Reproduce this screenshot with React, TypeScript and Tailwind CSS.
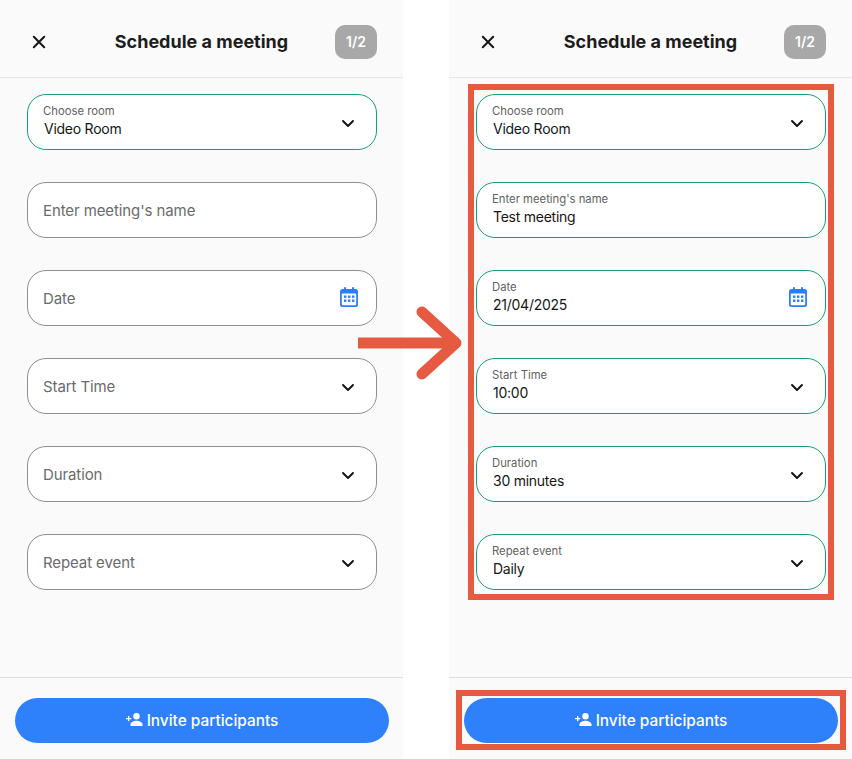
import React from "react";

const font = { fontFamily: "Inter, 'Noto Sans', sans-serif" };

function Chevron() {
  return (
    <svg width="14" height="9" viewBox="0 0 14 9" fill="none" className="shrink-0 mt-[2px]">
      <path d="M2 2l5 5 5-5" stroke="#111" strokeWidth="1.9" strokeLinecap="round" strokeLinejoin="round" />
    </svg>
  );
}

function CalendarIcon() {
  return (
    <svg width="18" height="20" viewBox="0 0 18 20" className="shrink-0 -mr-[3px] -mt-[2px]">
      <rect x="4" y="0" width="2" height="4" rx="1" fill="#2b7fff" />
      <rect x="12" y="0" width="2" height="4" rx="1" fill="#2b7fff" />
      <rect x="0" y="2" width="18" height="18" rx="2.5" fill="#2b7fff" />
      <rect x="1.8" y="6.5" width="14.4" height="11.7" rx="1" fill="#fff" />
      {[4, 8, 12].flatMap((x) =>
        [8.5, 12.5].map((y) => <rect key={`${x}-${y}`} x={x} y={y} width="2.4" height="2.4" fill="#2b7fff" />)
      )}
    </svg>
  );
}

type Item = { label: string; value?: string; icon?: "chevron" | "calendar" };

function Field({ label, value, icon }: Item) {
  const filled = value !== undefined;
  return (
    <div
      className={`h-14 w-[350px] rounded-[19px] border bg-white pl-[15px] pr-[21px] flex items-center justify-between ${
        filled ? "border-[#12a07a]" : "border-[#8f8f8f]"
      }`}
    >
      {filled ? (
        <div className="flex flex-col -mt-[4px]">
          <span className="text-[11.3px] leading-[16px] text-[#5f5f5f]">{label}</span>
          <span className="pl-px text-[14px] tracking-[-0.25px] leading-[19px] text-[#161616]">{value}</span>
        </div>
      ) : (
        <span className="mt-[2px] text-[15px] tracking-[-0.1px] text-[#6b6b6b]">{label}</span>
      )}
      {icon === "chevron" && <Chevron />}
      {icon === "calendar" && <CalendarIcon />}
    </div>
  );
}

function Panel({ items }: { items: Item[] }) {
  return (
    <div className="w-[403px] h-full bg-[#fafafa] flex flex-col">
      <header className="h-[78px] shrink-0 border-b border-[#e6e6e6] flex items-center justify-between pt-[6px] pl-[31px] pr-[26px]">
        <svg width="16" height="16" viewBox="0 0 16 16" fill="none" className="shrink-0">
          <path d="M2.800 2.800l10.400 10.400M13.200 2.800 2.800 13.200" stroke="#161616" strokeWidth="2" strokeLinecap="round" />
        </svg>
        <h1 className="ml-[21px] text-[18px] font-bold text-[#1c1c1c]">Schedule a meeting</h1>
        <div className="w-[42px] h-[34px] rounded-[10px] bg-[#a8a8a8] text-white text-[14px] font-semibold flex items-center justify-center">
          1/2
        </div>
      </header>
      <main className="flex-1 flex flex-col gap-8 pt-4 pl-[27px]">
        {items.map((it) => (
          <Field key={it.label} {...it} />
        ))}
      </main>
      <footer className="h-[82px] shrink-0 border-t border-[#dedede] pt-5 px-[15px]">
        <button className="w-[374px] h-[45px] rounded-full bg-[#2f80fb] text-white text-[15.4px] font-medium flex items-center justify-center gap-[4px]">
          <svg width="17" height="13" viewBox="0 0 17 13" fill="white" className="-mt-[2px]">
            <path d="M0 5h2V3h1.300v2h2v1.300h-2v2H2v-2H0z" />
            <circle cx="10.500" cy="3.200" r="3.200" />
            <path d="M4.500 13v-1.700c0-2.200 3.800-3.500 6-3.500s6 1.300 6 3.500V13z" />
          </svg>
          Invite participants
        </button>
      </footer>
    </div>
  );
}

const empty: Item[] = [
  { label: "Choose room", value: "Video Room", icon: "chevron" },
  { label: "Enter meeting's name" },
  { label: "Date", icon: "calendar" },
  { label: "Start Time", icon: "chevron" },
  { label: "Duration", icon: "chevron" },
  { label: "Repeat event", icon: "chevron" },
];

const done: Item[] = [
  { label: "Choose room", value: "Video Room", icon: "chevron" },
  { label: "Enter meeting's name", value: "Test meeting" },
  { label: "Date", value: "21/04/2025", icon: "calendar" },
  { label: "Start Time", value: "10:00", icon: "chevron" },
  { label: "Duration", value: "30 minutes", icon: "chevron" },
  { label: "Repeat event", value: "Daily", icon: "chevron" },
];

export default function App() {
  return (
    <div className="relative w-[852px] h-[759px] bg-white flex justify-between overflow-hidden" style={font}>
      <Panel items={empty} />
      <Panel items={done} />
      <div className="absolute left-[468px] top-[84px] w-[366px] h-[516px] border-[6px] border-[#e65a42]" />
      <div className="absolute left-[456px] top-[690px] w-[390px] h-[60px] border-[6px] border-[#e65a42]" />
      <svg className="absolute left-[356px] top-[304px]" width="108" height="78" viewBox="0 0 108 78" fill="none">
        <path d="M2 39h98" stroke="#e65a42" strokeWidth="11" />
        <path d="M66 8l34 31-34 31" stroke="#e65a42" strokeWidth="11" strokeLinecap="round" strokeLinejoin="round" />
      </svg>
    </div>
  );
}
